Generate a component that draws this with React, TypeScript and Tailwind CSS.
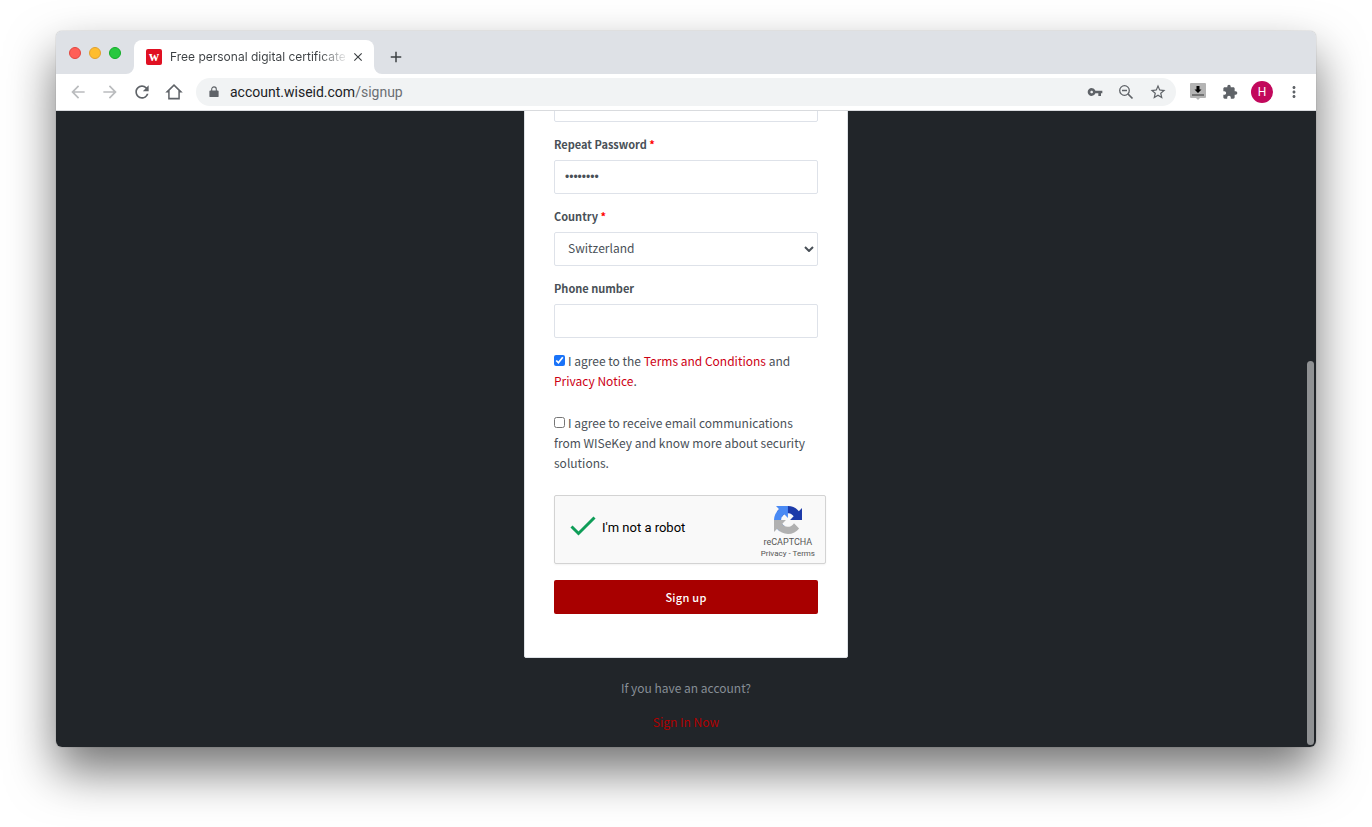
import React, { useState } from 'react';
import {
  MdArrowBack,
  MdArrowForward,
  MdRefresh,
  MdVpnKey,
  MdStarBorder,
  MdExtension,
  MdMoreVert,
  MdClose,
  MdAdd,
} from 'react-icons/md';

const inputClass =
  'block h-[34px] w-full rounded-xs border border-[#dee2e9] bg-white px-2.5 text-xs text-[#495057] outline-none';
const labelClass = 'mb-1.5 block text-[11px] leading-5 font-bold text-[#495057]';
const linkClass = 'text-[#cd0014]';

const HomeIcon = () => (
  <svg viewBox="0 0 24 24" className="size-5" fill="#5f6368">
    <path d="M12 5.2l5.2 5.1V19H6.800v-8.700L12 5.200M12 2.300L1.500 12.500H5V21h14v-8.500h3.500L12 2.300z" />
  </svg>
);

const LockIcon = () => (
  <svg viewBox="0 0 10 13" className="h-3 w-2.5" fill="#5f6368">
    <path d="M1 5h8a1 1 0 0 1 1 1v5a1 1 0 0 1-1 1H1a1 1 0 0 1-1-1V6a1 1 0 0 1 1-1z" />
    <path d="M2.500 5.500V3.500a2.500 2.500 0 0 1 5 0v2" fill="none" stroke="#5f6368" strokeWidth="1.2" />
  </svg>
);

const ZoomOutIcon = () => (
  <svg viewBox="0 0 16 16" className="size-4" fill="none" stroke="#5f6368" strokeWidth="1.3">
    <circle cx="6.500" cy="6.500" r="4.800" />
    <path d="M10 10l4.500 4.500" strokeWidth="1.700" />
    <path d="M4 6.500h5" />
  </svg>
);

const DownloadIcon = () => (
  <svg viewBox="0 0 16 18" className="h-[18px] w-4">
    <path d="M1 0h14a1 1 0 0 1 1 1v13a1 1 0 0 1-1 1h-5L8 17 6 15H1a1 1 0 0 1-1-1V1a1 1 0 0 1 1-1z" fill="#b4b4b4" />
    <path d="M6.500 3h3v3.500h2L8 10 4.500 6.500h2z" fill="#000" />
    <path d="M2 11.500h12v1H2z" fill="#333" />
  </svg>
);

const RecaptchaLogo = () => (
  <svg viewBox="0 0 64 64" className="size-7">
    <path
      d="M64 31.955l-.033-1.37V4.687l-7.16 7.16C50.948 4.674 42.033.093 32.05.093c-10.4 0-19.622 4.96-25.458 12.64l11.736 11.86a15.55 15.55 0 0 1 4.754-5.334c2.05-1.6 4.952-2.906 8.968-2.906.485 0 .86.057 1.135.163 4.976.393 9.288 3.14 11.828 7.124l-8.307 8.307L64 31.953"
      fill="#1c3aa9"
    />
    <path
      d="M31.862.094l-1.37.033H4.594l7.16 7.16C4.58 13.147 0 22.06 0 32.046c0 10.4 4.96 19.622 12.64 25.458L24.5 45.768a15.55 15.55 0 0 1-5.334-4.754c-1.6-2.05-2.906-4.952-2.906-8.968 0-.485.057-.86.163-1.135.393-4.976 3.14-9.288 7.124-11.828l8.307 8.307L31.86.095"
      fill="#4a8af4"
    />
    <path
      d="M.001 32.045l.033 1.37v25.898l7.16-7.16c5.86 7.173 14.774 11.754 24.76 11.754 10.4 0 19.622-4.96 25.458-12.64l-11.736-11.86a15.55 15.55 0 0 1-4.754 5.334c-2.05 1.6-4.952 2.906-8.968 2.906-.485 0-.86-.057-1.135-.163-4.976-.393-9.288-3.14-11.828-7.124l8.307-8.307c-10.522.04-22.4.066-27.295-.005"
      fill="#b1b1b1"
    />
  </svg>
);

const BrowserBar: React.FC = () => {
  return (
    <header className="shrink-0 font-[Roboto,sans-serif]">
      <div className="flex h-[43px] items-end bg-[#dee1e6] pl-[13px]">
        <div className="mb-[15px] flex gap-2">
          <span className="size-3 rounded-full border border-[#e2463f] bg-[#ff5f57]" />
          <span className="size-3 rounded-full border border-[#e1a02f] bg-[#ffbd2e]" />
          <span className="size-3 rounded-full border border-[#12ac28] bg-[#28c840]" />
        </div>
        <svg viewBox="0 0 8 8" className="ml-[5px] size-2" fill="#fff">
          <path d="M8 0v8H0a8 8 0 0 0 8-8z" />
        </svg>
        <div className="flex h-[34px] w-60 items-center rounded-t-lg bg-white pl-3">
          <span className="flex size-4 shrink-0 items-center justify-center rounded-xs bg-[#e01022] font-['Liberation_Serif',serif] text-sm leading-4 font-bold text-white">
            w
          </span>
          <span className="ml-2 w-[175px] bg-linear-to-r from-[#3c4043] from-85% to-[#3c404320] bg-clip-text font-[Inter,sans-serif] text-xs whitespace-nowrap text-transparent">
            Free personal digital certificate
          </span>
          <button aria-label="Close tab" className="ml-1.5">
            <MdClose className="size-3.5 text-[#3c4043]" />
          </button>
        </div>
        <svg viewBox="0 0 8 8" className="size-2" fill="#fff">
          <path d="M0 0v8h8a8 8 0 0 1-8-8z" />
        </svg>
        <button aria-label="New tab" className="mb-2 ml-[5px]">
          <MdAdd className="size-[18px] text-[#3c4043]" />
        </button>
      </div>

      <div className="flex h-[37px] items-center border-b border-[#d9dbde] bg-white pr-[13px] pl-3">
        <div className="flex gap-3">
          <button aria-label="Back"><MdArrowBack className="size-5 text-[#babcbe]" /></button>
          <button aria-label="Forward"><MdArrowForward className="size-5 text-[#babcbe]" /></button>
          <button aria-label="Reload"><MdRefresh className="size-5 text-[#5f6368]" /></button>
          <button aria-label="Home"><HomeIcon /></button>
        </div>
        <div className="ml-3 flex h-7 flex-1 items-center rounded-full bg-[#f1f3f4] pr-[9px] pl-[13px]">
          <LockIcon />
          <span className="ml-[11px] flex-1 text-sm text-[#202124]">
            account.wiseid.com<span className="text-[#6b6f73]">/signup</span>
          </span>
          <div className="flex items-center gap-[15px] text-[#5f6368]">
            <MdVpnKey className="size-4" />
            <ZoomOutIcon />
            <MdStarBorder className="size-[18px]" />
          </div>
        </div>
        <div className="ml-3.5 flex items-center gap-4 text-[#5f6368]">
          <DownloadIcon />
          <MdExtension className="size-4" />
        </div>
        <span className="ml-[13px] flex size-[22px] items-center justify-center rounded-full bg-[#c2085c] text-xs text-white">
          H
        </span>
        <button aria-label="Menu" className="ml-3"><MdMoreVert className="size-[18px] text-[#5f6368]" /></button>
      </div>
    </header>
  );
};

const SignupForm: React.FC = () => {
  const [password, setPassword] = useState('password');
  const [phone, setPhone] = useState('');
  const [terms, setTerms] = useState(true);
  const [emails, setEmails] = useState(false);

  return (
    <form
      onSubmit={(e) => e.preventDefault()}
      className="w-[324px] rounded-xs border border-[#dee2e6] bg-white px-[29px] pb-[43px] text-xs leading-5 text-[#495057]"
    >
      <input type="password" aria-label="Password" className={inputClass} />

      <div className="mt-3">
        <label htmlFor="repeat" className={labelClass}>
          Repeat Password <span className="text-[#ff0000]">*</span>
        </label>
        <input
          id="repeat"
          type="password"
          value={password}
          onChange={(e) => setPassword(e.target.value)}
          className={`${inputClass} font-['Liberation_Sans',sans-serif]`}
        />
      </div>

      <div className="mt-3">
        <label htmlFor="country" className={labelClass}>
          Country <span className="text-[#ff0000]">*</span>
        </label>
        <div className="relative">
          <select id="country" className={`${inputClass} appearance-none pb-0.5 pl-[13px]`}>
            <option>Switzerland</option>
          </select>
          <svg viewBox="0 0 10 6" className="pointer-events-none absolute top-3.5 right-1 h-1.5 w-2.5" fill="none" stroke="#495057" strokeWidth="2">
            <path d="M1 1l4 4 4-4" />
          </svg>
        </div>
      </div>

      <div className="mt-3">
        <label htmlFor="phone" className={labelClass}>Phone number</label>
        <input id="phone" type="tel" value={phone} onChange={(e) => setPhone(e.target.value)} className={inputClass} />
      </div>

      <div className="mt-[13px]">
        <input
          id="terms"
          type="checkbox"
          checked={terms}
          onChange={(e) => setTerms(e.target.checked)}
          className="mr-[3px] size-[11px] accent-[#1a73f8]"
        />
        <label htmlFor="terms">
          I agree to the <a href="#" className={linkClass}>Terms and Conditions</a> and{' '}
          <a href="#" className={linkClass}>Privacy Notice</a>.
        </label>
      </div>

      <div className="mt-[22px]">
        <input
          id="emails"
          type="checkbox"
          checked={emails}
          onChange={(e) => setEmails(e.target.checked)}
          className="mr-[3px] size-[11px]"
        />
        <label htmlFor="emails">
          I agree to receive email communications from WISeKey and know more about security solutions.
        </label>
      </div>

      <div className="mt-[22px] -mr-2 flex h-[69px] items-center rounded-xs border border-[#d3d3d3] bg-[#f9f9f9] pr-2.5 pl-[15px] font-[Roboto,sans-serif] text-black shadow-xs">
        <div className="flex flex-1 items-center pb-1">
          <svg viewBox="0 0 26 20" className="mb-1 h-5 w-[26px]" fill="none" stroke="#0f9d58" strokeWidth="3">
            <path d="M1.500 10.500l7 7L24.500 1.500" />
          </svg>
          <span className="ml-1.5 text-[13px]">I'm not a robot</span>
        </div>
        <div className="flex flex-col items-center pt-1.5 text-[#555]">
          <RecaptchaLogo />
          <span className="mt-0.5 text-[9px] leading-3">reCAPTCHA</span>
          <span className="text-[8px] leading-3">
            <a href="#">Privacy</a> - <a href="#">Terms</a>
          </span>
        </div>
      </div>

      <button type="submit" className="mt-4 block h-[34px] w-full rounded-xs bg-[#a80000] text-[11px] font-medium tracking-wide text-white">
        Sign up
      </button>
    </form>
  );
};

export default function App() {
  return (
    <div className="h-screen bg-white px-14 pt-[31px] pb-20">
      <div className="flex h-full flex-col overflow-hidden rounded-md shadow-[0_24px_48px_rgba(0,0,0,0.55),0_0_1px_rgba(0,0,0,0.5)]">
        <BrowserBar />
        <main className="relative flex min-h-0 flex-1 flex-col items-center justify-end overflow-hidden bg-[#212529] font-['Noto_Sans_CJK_SC',sans-serif]">
          <SignupForm />
          <div className="mt-5 flex flex-col gap-3.5 pb-[15px] text-center text-xs leading-5">
            <p className="text-[#868e96]">If you have an account?</p>
            <a href="#" className="text-[#b00000]">Sign In Now</a>
          </div>
          <div className="absolute right-0.5 bottom-0.5 h-96 w-[7px] rounded-full bg-[#8f9193]" />
        </main>
      </div>
    </div>
  );
}
